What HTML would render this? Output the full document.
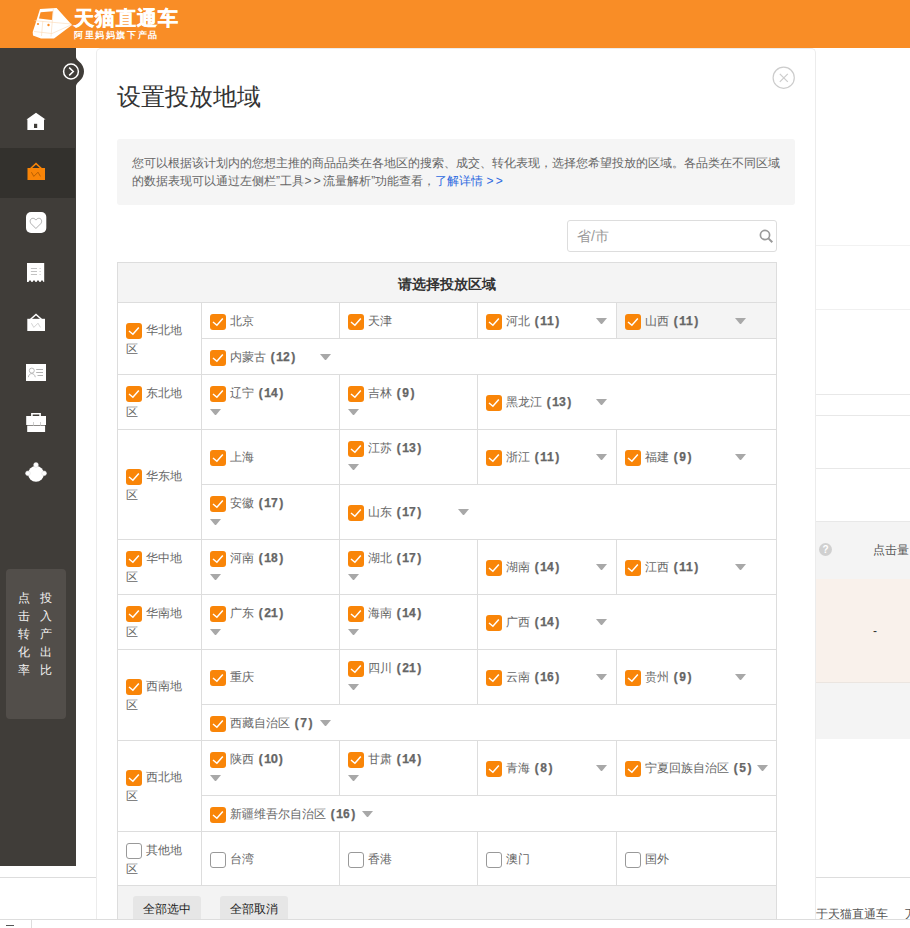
<!DOCTYPE html><html><head><meta charset="utf-8"><style>
*{margin:0;padding:0;box-sizing:border-box}
html,body{width:910px;height:928px;overflow:hidden;background:#fff;font-family:"Liberation Sans",sans-serif}
#root{position:relative;width:910px;height:928px;overflow:hidden}
.cb{position:absolute;width:16px;height:16px;border-radius:3px;background:#F98508}
.cb svg{display:block}
.cbu{position:absolute;width:16px;height:16px;border-radius:3px;border:1px solid #999;background:#fff}
.tri{position:absolute;display:block}
.t{position:absolute;font-size:12px;line-height:18px;color:#666;white-space:nowrap}
.t b{font-weight:bold;color:#666;font-family:"Liberation Mono",monospace;font-size:12px;letter-spacing:-0.5px;-webkit-text-stroke:0.25px #666}
.t i{font-style:normal;font-family:"Liberation Sans",sans-serif;font-size:13px;letter-spacing:0;margin-right:-1px}
.rg{position:absolute;font-size:12px;line-height:19px;color:#666;width:64px;word-break:break-all}
</style></head><body><div id="root">
<div style="position:absolute;left:0px;top:0px;width:910px;height:48px;background:#F98D26"></div>
<svg style="position:absolute;left:0;top:0" width="200" height="48" viewBox="0 0 200 48">
<polygon points="40,9 56.6,8 72,25 54,38.5 41,38.5 33,35.5 32.7,32 35,25" fill="#fff"/>
<polygon points="40.6,12.2 53,11.3 51.9,19.9 39,18.5" fill="#F98D26"/>
<path d="M34.6,20.7 L71.4,24 M53.3,8.6 L51,36.6 M42.8,21.2 L41.5,36 M34,31.5 L52,33.5 L71,25" fill="none" stroke="#FCD9B3" stroke-width="0.6"/>
<circle cx="38" cy="24" r="1.1" fill="#F98D26"/>
<circle cx="48.5" cy="25" r="1.2" fill="#F98D26"/>
</svg>
<div style="position:absolute;left:74px;top:5px;font-size:20px;line-height:26px;font-weight:bold;color:#fff;letter-spacing:1px;-webkit-text-stroke:0.5px #fff">天猫直通车</div>
<div style="position:absolute;left:74px;top:30px;font-size:9px;line-height:11px;font-weight:bold;color:#fff;letter-spacing:1.6px">阿里妈妈旗下产品</div>
<div style="position:absolute;left:0px;top:48px;width:76px;height:818px;background:#403D39"></div>
<div style="position:absolute;left:0px;top:148px;width:75px;height:50px;background:#33312D"></div>
<svg style="position:absolute;left:0;top:0" width="100" height="100" viewBox="0 0 100 100"><path d="M75.5,55 Q76,59.5 79,61.5 A12.5,12.5 0 0 1 79,81.5 Q76,83.5 75.5,88 Z" fill="#403D39"/><circle cx="71" cy="71.5" r="7.4" fill="none" stroke="#fff" stroke-width="1.5"/><path d="M69.2,67.6 L73.3,71.5 L69.2,75.4" fill="none" stroke="#fff" stroke-width="1.5"/></svg>
<svg style="position:absolute;left:26px;top:112px" width="20" height="20" viewBox="0 0 20 20"><path d="M10 0.7 L19.6 7.6 L18 7.6 L18 18 L1.4 18 L1.4 7.6 L0.5 7.6 Z" fill="#fff"/><rect x="8" y="11.8" width="3.2" height="4.2" fill="#403D39"/></svg>
<svg style="position:absolute;left:26px;top:162px" width="20" height="20" viewBox="0 0 20 20"><rect x="1.5" y="6" width="17.5" height="12" fill="#F98508"/><path d="M4.6 6.5 L10 1.6 L15.4 6.5" fill="none" stroke="#F98508" stroke-width="1.5"/><path d="M5.4 10.2 L7.8 14.4 L12 10.2 L14.4 14.4" fill="none" stroke="#A85500" stroke-width="0.8"/></svg>
<svg style="position:absolute;left:26px;top:212px" width="21" height="21" viewBox="0 0 21 21"><rect x="0" y="0" width="20.3" height="21" rx="5" fill="#fff"/><path d="M9.9 16.5 L5.2 11.8 C3.6 10.2 3.8 7 6.2 6.4 C7.8 6 9.1 6.9 9.9 8.1 C10.7 6.9 12 6 13.6 6.4 C16 7 16.2 10.2 14.6 11.8 Z" fill="none" stroke="#999" stroke-width="0.8"/></svg>
<svg style="position:absolute;left:27px;top:263px" width="18" height="19" viewBox="0 0 18 19"><path d="M0 0 H17.2 V19 H16.6 L15 17.1 L13.4 19 H12.6 L11 17.1 L9.4 19 H8.6 L7 17.1 L5.4 19 H4.6 L3 17.1 L1.4 19 H0 Z" fill="#fff"/><path d="M3.9 5.5 H10 M3.9 8.5 H10 M3.9 11.5 H10 M12.6 5.5 H13.6 M12.6 8.5 H13.6 M12.6 11.5 H13.6" stroke="#bbb" stroke-width="0.9"/></svg>
<svg style="position:absolute;left:26px;top:313px" width="20" height="19" viewBox="0 0 20 19"><rect x="1.3" y="5.8" width="17.7" height="12.2" fill="#fff"/><path d="M4.6 6.2 L10 1.5 L15.4 6.2" fill="none" stroke="#fff" stroke-width="1.5"/><path d="M5.4 10.2 L7.8 14.4 L12 10.2 L14.4 14.4" fill="none" stroke="#c8c8c8" stroke-width="0.8"/></svg>
<svg style="position:absolute;left:26px;top:364px" width="20" height="17" viewBox="0 0 20 17"><rect x="0" y="0" width="20" height="17" fill="#fff"/><circle cx="5.8" cy="6.6" r="2.5" fill="none" stroke="#aaa" stroke-width="0.8"/><path d="M2.3 13.2 C2.8 10.8 4 9.6 5.8 9.6 C7.6 9.6 8.8 10.8 9.3 13.2" fill="none" stroke="#aaa" stroke-width="0.8"/><path d="M10.2 5.5 H17 M10.2 8.5 H17 M11.5 11.5 H17" stroke="#aaa" stroke-width="0.9"/></svg>
<svg style="position:absolute;left:26px;top:412px" width="20" height="21" viewBox="0 0 20 21"><path d="M5.9 4.5 V1.8 H14.1 V4.5" fill="none" stroke="#fff" stroke-width="1.6"/><rect x="0.2" y="4" width="19.8" height="9" fill="#fff"/><rect x="1.2" y="13.6" width="17.9" height="6.4" fill="#fff"/><path d="M7.5 10 V14 M14.5 10 V14" stroke="#bbb" stroke-width="0.7"/></svg>
<svg style="position:absolute;left:25px;top:462px" width="22" height="21" viewBox="0 0 22 21"><circle cx="11" cy="11.8" r="7.9" fill="#fff"/><circle cx="11" cy="3" r="2.4" fill="#fff" stroke="#d8d8d8" stroke-width="0.5"/><circle cx="2.9" cy="11.3" r="2.4" fill="#fff" stroke="#d8d8d8" stroke-width="0.5"/><circle cx="19.1" cy="11.3" r="2.4" fill="#fff" stroke="#d8d8d8" stroke-width="0.5"/></svg>
<div style="position:absolute;left:6px;top:569px;width:60px;height:150px;background:#524E4A;border-radius:4px"></div>
<div style="position:absolute;left:18px;top:589px;width:12px;font-size:12px;line-height:18px;color:#f2f2f2">点击转化率</div>
<div style="position:absolute;left:40px;top:589px;width:12px;font-size:12px;line-height:18px;color:#f2f2f2">投入产出比</div>
<div style="position:absolute;left:816px;top:245px;width:94px;height:1px;background:#f2f2f2"></div>
<div style="position:absolute;left:816px;top:309px;width:94px;height:1px;background:#f0f0f0"></div>
<div style="position:absolute;left:816px;top:394px;width:94px;height:1px;background:#e8e8e8"></div>
<div style="position:absolute;left:816px;top:415px;width:94px;height:1px;background:#e8e8e8"></div>
<div style="position:absolute;left:816px;top:468px;width:94px;height:1px;background:#e8e8e8"></div>
<div style="position:absolute;left:816px;top:521px;width:94px;height:1px;background:#e8e8e8"></div>
<div style="position:absolute;left:816px;top:522px;width:94px;height:57px;background:#f4f4f4"></div>
<div style="position:absolute;left:816px;top:579px;width:94px;height:103px;background:#F9F1EB"></div>
<div style="position:absolute;left:816px;top:682px;width:94px;height:1px;background:#ebe5e0"></div>
<div style="position:absolute;left:816px;top:683px;width:94px;height:56px;background:#f4f4f4"></div>
<div style="position:absolute;left:819px;top:543px;width:13px;height:13px;border-radius:50%;background:#d0d0d0;color:#fff;font-size:10px;line-height:13px;text-align:center;font-weight:bold">?</div>
<div style="position:absolute;left:873px;top:541px;font-size:12px;line-height:18px;color:#555;white-space:nowrap">点击量</div>
<div style="position:absolute;left:873px;top:622px;font-size:12px;line-height:18px;color:#333">-</div>
<div style="position:absolute;left:0px;top:877px;width:96px;height:1px;background:#dddddd"></div>
<div style="position:absolute;left:816px;top:877px;width:94px;height:1px;background:#dddddd"></div>
<div style="position:absolute;left:816px;top:905px;width:94px;height:14px;overflow:hidden;font-size:12px;line-height:18px;color:#555;white-space:nowrap">于天猫直通车<span style="display:inline-block;width:17px"></span>万</div>
<div style="position:absolute;left:0px;top:919px;width:910px;height:1px;background:#dddddd"></div>
<div style="position:absolute;left:31px;top:919px;width:1px;height:9px;background:#dddddd"></div>
<div style="position:absolute;left:6px;top:925px;width:8px;height:1px;background:#555"></div>
<div style="position:absolute;left:96px;top:48px;width:720px;height:871px;background:#fff;border:1px solid #ececec;border-bottom:none;border-radius:5px 5px 0 0"></div>
<svg style="position:absolute;left:772px;top:66px" width="24" height="24" viewBox="0 0 24 24"><circle cx="11.7" cy="11.7" r="10.6" fill="none" stroke="#cccccc" stroke-width="1.2"/><path d="M7.8 7.8 L15.8 15.8 M15.8 7.8 L7.8 15.8" stroke="#cccccc" stroke-width="1.2"/></svg>
<div style="position:absolute;left:117px;top:81px;font-size:24px;line-height:32px;color:#333;white-space:nowrap">设置投放地域</div>
<div style="position:absolute;left:117px;top:139px;width:678px;height:66px;background:#f5f5f5;border-radius:3px"></div>
<div style="position:absolute;left:132px;top:154px;width:660px;font-size:12px;line-height:18px;color:#666">您可以根据该计划内的您想主推的商品品类在各地区的搜索、成交、转化表现，选择您希望投放的区域。各品类在不同区域<br>的数据表现可以通过左侧栏”工具<span style="letter-spacing:2.3px;margin-left:0.5px">&gt;&gt;</span>流量解析”功能查看，<span style="color:#2d6ae0">了解详情 <span style="letter-spacing:2.3px">&gt;&gt;</span></span></div>
<div style="position:absolute;left:567px;top:220px;width:210px;height:32px;border:1px solid #dddddd;border-radius:3px;background:#fff"></div>
<div style="position:absolute;left:577px;top:227px;font-size:14px;line-height:18px;color:#999">省/市</div>
<svg style="position:absolute;left:759px;top:229px" width="15" height="15" viewBox="0 0 15 15"><circle cx="6" cy="6" r="4.6" fill="none" stroke="#999" stroke-width="1.7"/><path d="M9.4 9.4 L13.3 13.3" stroke="#999" stroke-width="2"/></svg>
<div style="position:absolute;left:117px;top:262px;width:660px;height:40px;background:#f4f4f4;border:1px solid #dddddd;border-bottom:none"></div>
<div style="position:absolute;left:117px;top:275px;width:660px;text-align:center;font-size:14px;line-height:18px;font-weight:bold;color:#333">请选择投放区域</div>
<div style="position:absolute;left:117px;top:885px;width:660px;height:34px;background:#f3f3f3"></div>
<div style="position:absolute;left:133px;top:896px;width:68px;height:23px;background:#e6e6e6;border-radius:3px 3px 0 0"></div>
<div style="position:absolute;left:220px;top:896px;width:68px;height:23px;background:#e6e6e6;border-radius:3px 3px 0 0"></div>
<div style="position:absolute;left:143px;top:900px;font-size:12px;line-height:18px;color:#222">全部选中</div>
<div style="position:absolute;left:230px;top:900px;font-size:12px;line-height:18px;color:#222">全部取消</div>
<div style="position:absolute;left:617px;top:303px;width:159px;height:35px;background:#f4f4f4"></div>
<div class="cb" style="left:126px;top:323px"><svg width="16" height="16" viewBox="0 0 16 16"><path d="M3 8 L6.9 11.3 L12.8 4.6" fill="none" stroke="#fff" stroke-width="1.5"/></svg></div><div class="rg" style="left:126px;top:320.5px"><span style="display:inline-block;width:20px"></span>华北地区</div>
<div style="position:absolute;left:201px;top:338px;width:576px;height:1px;background:#dddddd"></div>
<div class="cb" style="left:210px;top:314px"><svg width="16" height="16" viewBox="0 0 16 16"><path d="M3 8 L6.9 11.3 L12.8 4.6" fill="none" stroke="#fff" stroke-width="1.5"/></svg></div><div class="t" style="left:230px;top:312px">北京</div>
<div class="cb" style="left:348px;top:314px"><svg width="16" height="16" viewBox="0 0 16 16"><path d="M3 8 L6.9 11.3 L12.8 4.6" fill="none" stroke="#fff" stroke-width="1.5"/></svg></div><div class="t" style="left:368px;top:312px">天津</div>
<div style="position:absolute;left:339px;top:302px;width:1px;height:36px;background:#dddddd"></div>
<div class="cb" style="left:486px;top:314px"><svg width="16" height="16" viewBox="0 0 16 16"><path d="M3 8 L6.9 11.3 L12.8 4.6" fill="none" stroke="#fff" stroke-width="1.5"/></svg></div><div class="t" style="left:506px;top:312px">河北 <b>(11)</b></div><svg class="tri" style="left:596px;top:318px" width="11" height="6" viewBox="0 0 11 6"><polygon points="0,0 11,0 6,6 5,6" fill="#a8a8a8"/></svg>
<div style="position:absolute;left:477px;top:302px;width:1px;height:36px;background:#dddddd"></div>
<div class="cb" style="left:625px;top:314px"><svg width="16" height="16" viewBox="0 0 16 16"><path d="M3 8 L6.9 11.3 L12.8 4.6" fill="none" stroke="#fff" stroke-width="1.5"/></svg></div><div class="t" style="left:645px;top:312px">山西 <b>(11)</b></div><svg class="tri" style="left:735px;top:318px" width="11" height="6" viewBox="0 0 11 6"><polygon points="0,0 11,0 6,6 5,6" fill="#a8a8a8"/></svg>
<div style="position:absolute;left:616px;top:302px;width:1px;height:36px;background:#dddddd"></div>
<div style="position:absolute;left:201px;top:374px;width:576px;height:1px;background:#dddddd"></div>
<div class="cb" style="left:210px;top:350px"><svg width="16" height="16" viewBox="0 0 16 16"><path d="M3 8 L6.9 11.3 L12.8 4.6" fill="none" stroke="#fff" stroke-width="1.5"/></svg></div><div class="t" style="left:230px;top:348px">内蒙古 <b>(12)</b></div><svg class="tri" style="left:320px;top:354px" width="11" height="6" viewBox="0 0 11 6"><polygon points="0,0 11,0 6,6 5,6" fill="#a8a8a8"/></svg>
<div style="position:absolute;left:117px;top:374px;width:84px;height:1px;background:#dddddd"></div>
<div class="cb" style="left:126px;top:386px"><svg width="16" height="16" viewBox="0 0 16 16"><path d="M3 8 L6.9 11.3 L12.8 4.6" fill="none" stroke="#fff" stroke-width="1.5"/></svg></div><div class="rg" style="left:126px;top:383.5px"><span style="display:inline-block;width:20px"></span>东北地区</div>
<div style="position:absolute;left:201px;top:429px;width:576px;height:1px;background:#dddddd"></div>
<div class="cb" style="left:210px;top:386px"><svg width="16" height="16" viewBox="0 0 16 16"><path d="M3 8 L6.9 11.3 L12.8 4.6" fill="none" stroke="#fff" stroke-width="1.5"/></svg></div><div class="t" style="left:230px;top:384px">辽宁 <b>(14)</b></div><svg class="tri" style="left:210px;top:409px" width="11" height="6" viewBox="0 0 11 6"><polygon points="0,0 11,0 6,6 5,6" fill="#a8a8a8"/></svg>
<div class="cb" style="left:348px;top:386px"><svg width="16" height="16" viewBox="0 0 16 16"><path d="M3 8 L6.9 11.3 L12.8 4.6" fill="none" stroke="#fff" stroke-width="1.5"/></svg></div><div class="t" style="left:368px;top:384px">吉林 <b>(9)</b></div><svg class="tri" style="left:348px;top:409px" width="11" height="6" viewBox="0 0 11 6"><polygon points="0,0 11,0 6,6 5,6" fill="#a8a8a8"/></svg>
<div style="position:absolute;left:339px;top:374px;width:1px;height:55px;background:#dddddd"></div>
<div class="cb" style="left:486px;top:395px"><svg width="16" height="16" viewBox="0 0 16 16"><path d="M3 8 L6.9 11.3 L12.8 4.6" fill="none" stroke="#fff" stroke-width="1.5"/></svg></div><div class="t" style="left:506px;top:393px">黑龙江 <b>(13)</b></div><svg class="tri" style="left:596px;top:399px" width="11" height="6" viewBox="0 0 11 6"><polygon points="0,0 11,0 6,6 5,6" fill="#a8a8a8"/></svg>
<div style="position:absolute;left:477px;top:374px;width:1px;height:55px;background:#dddddd"></div>
<div style="position:absolute;left:117px;top:429px;width:84px;height:1px;background:#dddddd"></div>
<div class="cb" style="left:126px;top:469px"><svg width="16" height="16" viewBox="0 0 16 16"><path d="M3 8 L6.9 11.3 L12.8 4.6" fill="none" stroke="#fff" stroke-width="1.5"/></svg></div><div class="rg" style="left:126px;top:466.5px"><span style="display:inline-block;width:20px"></span>华东地区</div>
<div style="position:absolute;left:201px;top:484px;width:576px;height:1px;background:#dddddd"></div>
<div class="cb" style="left:210px;top:450px"><svg width="16" height="16" viewBox="0 0 16 16"><path d="M3 8 L6.9 11.3 L12.8 4.6" fill="none" stroke="#fff" stroke-width="1.5"/></svg></div><div class="t" style="left:230px;top:448px">上海</div>
<div class="cb" style="left:348px;top:441px"><svg width="16" height="16" viewBox="0 0 16 16"><path d="M3 8 L6.9 11.3 L12.8 4.6" fill="none" stroke="#fff" stroke-width="1.5"/></svg></div><div class="t" style="left:368px;top:439px">江苏 <b>(13)</b></div><svg class="tri" style="left:348px;top:464px" width="11" height="6" viewBox="0 0 11 6"><polygon points="0,0 11,0 6,6 5,6" fill="#a8a8a8"/></svg>
<div style="position:absolute;left:339px;top:429px;width:1px;height:55px;background:#dddddd"></div>
<div class="cb" style="left:486px;top:450px"><svg width="16" height="16" viewBox="0 0 16 16"><path d="M3 8 L6.9 11.3 L12.8 4.6" fill="none" stroke="#fff" stroke-width="1.5"/></svg></div><div class="t" style="left:506px;top:448px">浙江 <b>(11)</b></div><svg class="tri" style="left:596px;top:454px" width="11" height="6" viewBox="0 0 11 6"><polygon points="0,0 11,0 6,6 5,6" fill="#a8a8a8"/></svg>
<div style="position:absolute;left:477px;top:429px;width:1px;height:55px;background:#dddddd"></div>
<div class="cb" style="left:625px;top:450px"><svg width="16" height="16" viewBox="0 0 16 16"><path d="M3 8 L6.9 11.3 L12.8 4.6" fill="none" stroke="#fff" stroke-width="1.5"/></svg></div><div class="t" style="left:645px;top:448px">福建 <b>(9)</b></div><svg class="tri" style="left:735px;top:454px" width="11" height="6" viewBox="0 0 11 6"><polygon points="0,0 11,0 6,6 5,6" fill="#a8a8a8"/></svg>
<div style="position:absolute;left:616px;top:429px;width:1px;height:55px;background:#dddddd"></div>
<div style="position:absolute;left:201px;top:539px;width:576px;height:1px;background:#dddddd"></div>
<div class="cb" style="left:210px;top:496px"><svg width="16" height="16" viewBox="0 0 16 16"><path d="M3 8 L6.9 11.3 L12.8 4.6" fill="none" stroke="#fff" stroke-width="1.5"/></svg></div><div class="t" style="left:230px;top:494px">安徽 <b>(17)</b></div><svg class="tri" style="left:210px;top:519px" width="11" height="6" viewBox="0 0 11 6"><polygon points="0,0 11,0 6,6 5,6" fill="#a8a8a8"/></svg>
<div class="cb" style="left:348px;top:505px"><svg width="16" height="16" viewBox="0 0 16 16"><path d="M3 8 L6.9 11.3 L12.8 4.6" fill="none" stroke="#fff" stroke-width="1.5"/></svg></div><div class="t" style="left:368px;top:503px">山东 <b>(17)</b></div><svg class="tri" style="left:458px;top:509px" width="11" height="6" viewBox="0 0 11 6"><polygon points="0,0 11,0 6,6 5,6" fill="#a8a8a8"/></svg>
<div style="position:absolute;left:339px;top:484px;width:1px;height:55px;background:#dddddd"></div>
<div style="position:absolute;left:117px;top:539px;width:84px;height:1px;background:#dddddd"></div>
<div class="cb" style="left:126px;top:551px"><svg width="16" height="16" viewBox="0 0 16 16"><path d="M3 8 L6.9 11.3 L12.8 4.6" fill="none" stroke="#fff" stroke-width="1.5"/></svg></div><div class="rg" style="left:126px;top:548.5px"><span style="display:inline-block;width:20px"></span>华中地区</div>
<div style="position:absolute;left:201px;top:594px;width:576px;height:1px;background:#dddddd"></div>
<div class="cb" style="left:210px;top:551px"><svg width="16" height="16" viewBox="0 0 16 16"><path d="M3 8 L6.9 11.3 L12.8 4.6" fill="none" stroke="#fff" stroke-width="1.5"/></svg></div><div class="t" style="left:230px;top:549px">河南 <b>(18)</b></div><svg class="tri" style="left:210px;top:574px" width="11" height="6" viewBox="0 0 11 6"><polygon points="0,0 11,0 6,6 5,6" fill="#a8a8a8"/></svg>
<div class="cb" style="left:348px;top:551px"><svg width="16" height="16" viewBox="0 0 16 16"><path d="M3 8 L6.9 11.3 L12.8 4.6" fill="none" stroke="#fff" stroke-width="1.5"/></svg></div><div class="t" style="left:368px;top:549px">湖北 <b>(17)</b></div><svg class="tri" style="left:348px;top:574px" width="11" height="6" viewBox="0 0 11 6"><polygon points="0,0 11,0 6,6 5,6" fill="#a8a8a8"/></svg>
<div style="position:absolute;left:339px;top:539px;width:1px;height:55px;background:#dddddd"></div>
<div class="cb" style="left:486px;top:560px"><svg width="16" height="16" viewBox="0 0 16 16"><path d="M3 8 L6.9 11.3 L12.8 4.6" fill="none" stroke="#fff" stroke-width="1.5"/></svg></div><div class="t" style="left:506px;top:558px">湖南 <b>(14)</b></div><svg class="tri" style="left:596px;top:564px" width="11" height="6" viewBox="0 0 11 6"><polygon points="0,0 11,0 6,6 5,6" fill="#a8a8a8"/></svg>
<div style="position:absolute;left:477px;top:539px;width:1px;height:55px;background:#dddddd"></div>
<div class="cb" style="left:625px;top:560px"><svg width="16" height="16" viewBox="0 0 16 16"><path d="M3 8 L6.9 11.3 L12.8 4.6" fill="none" stroke="#fff" stroke-width="1.5"/></svg></div><div class="t" style="left:645px;top:558px">江西 <b>(11)</b></div><svg class="tri" style="left:735px;top:564px" width="11" height="6" viewBox="0 0 11 6"><polygon points="0,0 11,0 6,6 5,6" fill="#a8a8a8"/></svg>
<div style="position:absolute;left:616px;top:539px;width:1px;height:55px;background:#dddddd"></div>
<div style="position:absolute;left:117px;top:594px;width:84px;height:1px;background:#dddddd"></div>
<div class="cb" style="left:126px;top:606px"><svg width="16" height="16" viewBox="0 0 16 16"><path d="M3 8 L6.9 11.3 L12.8 4.6" fill="none" stroke="#fff" stroke-width="1.5"/></svg></div><div class="rg" style="left:126px;top:603.5px"><span style="display:inline-block;width:20px"></span>华南地区</div>
<div style="position:absolute;left:201px;top:649px;width:576px;height:1px;background:#dddddd"></div>
<div class="cb" style="left:210px;top:606px"><svg width="16" height="16" viewBox="0 0 16 16"><path d="M3 8 L6.9 11.3 L12.8 4.6" fill="none" stroke="#fff" stroke-width="1.5"/></svg></div><div class="t" style="left:230px;top:604px">广东 <b>(21)</b></div><svg class="tri" style="left:210px;top:629px" width="11" height="6" viewBox="0 0 11 6"><polygon points="0,0 11,0 6,6 5,6" fill="#a8a8a8"/></svg>
<div class="cb" style="left:348px;top:606px"><svg width="16" height="16" viewBox="0 0 16 16"><path d="M3 8 L6.9 11.3 L12.8 4.6" fill="none" stroke="#fff" stroke-width="1.5"/></svg></div><div class="t" style="left:368px;top:604px">海南 <b>(14)</b></div><svg class="tri" style="left:348px;top:629px" width="11" height="6" viewBox="0 0 11 6"><polygon points="0,0 11,0 6,6 5,6" fill="#a8a8a8"/></svg>
<div style="position:absolute;left:339px;top:594px;width:1px;height:55px;background:#dddddd"></div>
<div class="cb" style="left:486px;top:615px"><svg width="16" height="16" viewBox="0 0 16 16"><path d="M3 8 L6.9 11.3 L12.8 4.6" fill="none" stroke="#fff" stroke-width="1.5"/></svg></div><div class="t" style="left:506px;top:613px">广西 <b>(14)</b></div><svg class="tri" style="left:596px;top:619px" width="11" height="6" viewBox="0 0 11 6"><polygon points="0,0 11,0 6,6 5,6" fill="#a8a8a8"/></svg>
<div style="position:absolute;left:477px;top:594px;width:1px;height:55px;background:#dddddd"></div>
<div style="position:absolute;left:117px;top:649px;width:84px;height:1px;background:#dddddd"></div>
<div class="cb" style="left:126px;top:679px"><svg width="16" height="16" viewBox="0 0 16 16"><path d="M3 8 L6.9 11.3 L12.8 4.6" fill="none" stroke="#fff" stroke-width="1.5"/></svg></div><div class="rg" style="left:126px;top:676.5px"><span style="display:inline-block;width:20px"></span>西南地区</div>
<div style="position:absolute;left:201px;top:704px;width:576px;height:1px;background:#dddddd"></div>
<div class="cb" style="left:210px;top:670px"><svg width="16" height="16" viewBox="0 0 16 16"><path d="M3 8 L6.9 11.3 L12.8 4.6" fill="none" stroke="#fff" stroke-width="1.5"/></svg></div><div class="t" style="left:230px;top:668px">重庆</div>
<div class="cb" style="left:348px;top:661px"><svg width="16" height="16" viewBox="0 0 16 16"><path d="M3 8 L6.9 11.3 L12.8 4.6" fill="none" stroke="#fff" stroke-width="1.5"/></svg></div><div class="t" style="left:368px;top:659px">四川 <b>(21)</b></div><svg class="tri" style="left:348px;top:684px" width="11" height="6" viewBox="0 0 11 6"><polygon points="0,0 11,0 6,6 5,6" fill="#a8a8a8"/></svg>
<div style="position:absolute;left:339px;top:649px;width:1px;height:55px;background:#dddddd"></div>
<div class="cb" style="left:486px;top:670px"><svg width="16" height="16" viewBox="0 0 16 16"><path d="M3 8 L6.9 11.3 L12.8 4.6" fill="none" stroke="#fff" stroke-width="1.5"/></svg></div><div class="t" style="left:506px;top:668px">云南 <b>(16)</b></div><svg class="tri" style="left:596px;top:674px" width="11" height="6" viewBox="0 0 11 6"><polygon points="0,0 11,0 6,6 5,6" fill="#a8a8a8"/></svg>
<div style="position:absolute;left:477px;top:649px;width:1px;height:55px;background:#dddddd"></div>
<div class="cb" style="left:625px;top:670px"><svg width="16" height="16" viewBox="0 0 16 16"><path d="M3 8 L6.9 11.3 L12.8 4.6" fill="none" stroke="#fff" stroke-width="1.5"/></svg></div><div class="t" style="left:645px;top:668px">贵州 <b>(9)</b></div><svg class="tri" style="left:735px;top:674px" width="11" height="6" viewBox="0 0 11 6"><polygon points="0,0 11,0 6,6 5,6" fill="#a8a8a8"/></svg>
<div style="position:absolute;left:616px;top:649px;width:1px;height:55px;background:#dddddd"></div>
<div style="position:absolute;left:201px;top:740px;width:576px;height:1px;background:#dddddd"></div>
<div class="cb" style="left:210px;top:716px"><svg width="16" height="16" viewBox="0 0 16 16"><path d="M3 8 L6.9 11.3 L12.8 4.6" fill="none" stroke="#fff" stroke-width="1.5"/></svg></div><div class="t" style="left:230px;top:714px">西藏自治区 <b>(7)</b></div><svg class="tri" style="left:320px;top:720px" width="11" height="6" viewBox="0 0 11 6"><polygon points="0,0 11,0 6,6 5,6" fill="#a8a8a8"/></svg>
<div style="position:absolute;left:117px;top:740px;width:84px;height:1px;background:#dddddd"></div>
<div class="cb" style="left:126px;top:770px"><svg width="16" height="16" viewBox="0 0 16 16"><path d="M3 8 L6.9 11.3 L12.8 4.6" fill="none" stroke="#fff" stroke-width="1.5"/></svg></div><div class="rg" style="left:126px;top:767.5px"><span style="display:inline-block;width:20px"></span>西北地区</div>
<div style="position:absolute;left:201px;top:795px;width:576px;height:1px;background:#dddddd"></div>
<div class="cb" style="left:210px;top:752px"><svg width="16" height="16" viewBox="0 0 16 16"><path d="M3 8 L6.9 11.3 L12.8 4.6" fill="none" stroke="#fff" stroke-width="1.5"/></svg></div><div class="t" style="left:230px;top:750px">陕西 <b>(1<i>0</i>)</b></div><svg class="tri" style="left:210px;top:775px" width="11" height="6" viewBox="0 0 11 6"><polygon points="0,0 11,0 6,6 5,6" fill="#a8a8a8"/></svg>
<div class="cb" style="left:348px;top:752px"><svg width="16" height="16" viewBox="0 0 16 16"><path d="M3 8 L6.9 11.3 L12.8 4.6" fill="none" stroke="#fff" stroke-width="1.5"/></svg></div><div class="t" style="left:368px;top:750px">甘肃 <b>(14)</b></div><svg class="tri" style="left:348px;top:775px" width="11" height="6" viewBox="0 0 11 6"><polygon points="0,0 11,0 6,6 5,6" fill="#a8a8a8"/></svg>
<div style="position:absolute;left:339px;top:740px;width:1px;height:55px;background:#dddddd"></div>
<div class="cb" style="left:486px;top:761px"><svg width="16" height="16" viewBox="0 0 16 16"><path d="M3 8 L6.9 11.3 L12.8 4.6" fill="none" stroke="#fff" stroke-width="1.5"/></svg></div><div class="t" style="left:506px;top:759px">青海 <b>(8)</b></div><svg class="tri" style="left:596px;top:765px" width="11" height="6" viewBox="0 0 11 6"><polygon points="0,0 11,0 6,6 5,6" fill="#a8a8a8"/></svg>
<div style="position:absolute;left:477px;top:740px;width:1px;height:55px;background:#dddddd"></div>
<div class="cb" style="left:625px;top:761px"><svg width="16" height="16" viewBox="0 0 16 16"><path d="M3 8 L6.9 11.3 L12.8 4.6" fill="none" stroke="#fff" stroke-width="1.5"/></svg></div><div class="t" style="left:645px;top:759px">宁夏回族自治区 <b>(5)</b></div><svg class="tri" style="left:757px;top:765px" width="11" height="6" viewBox="0 0 11 6"><polygon points="0,0 11,0 6,6 5,6" fill="#a8a8a8"/></svg>
<div style="position:absolute;left:616px;top:740px;width:1px;height:55px;background:#dddddd"></div>
<div style="position:absolute;left:201px;top:831px;width:576px;height:1px;background:#dddddd"></div>
<div class="cb" style="left:210px;top:807px"><svg width="16" height="16" viewBox="0 0 16 16"><path d="M3 8 L6.9 11.3 L12.8 4.6" fill="none" stroke="#fff" stroke-width="1.5"/></svg></div><div class="t" style="left:230px;top:805px">新疆维吾尔自治区 <b>(16)</b></div><svg class="tri" style="left:362px;top:811px" width="11" height="6" viewBox="0 0 11 6"><polygon points="0,0 11,0 6,6 5,6" fill="#a8a8a8"/></svg>
<div style="position:absolute;left:117px;top:831px;width:84px;height:1px;background:#dddddd"></div>
<div class="cbu" style="left:126px;top:843px"></div><div class="rg" style="left:126px;top:840.5px"><span style="display:inline-block;width:20px"></span>其他地区</div>
<div style="position:absolute;left:201px;top:885px;width:576px;height:1px;background:#dddddd"></div>
<div class="cbu" style="left:210px;top:852px"></div><div class="t" style="left:230px;top:850px">台湾</div>
<div class="cbu" style="left:348px;top:852px"></div><div class="t" style="left:368px;top:850px">香港</div>
<div style="position:absolute;left:339px;top:831px;width:1px;height:54px;background:#dddddd"></div>
<div class="cbu" style="left:486px;top:852px"></div><div class="t" style="left:506px;top:850px">澳门</div>
<div style="position:absolute;left:477px;top:831px;width:1px;height:54px;background:#dddddd"></div>
<div class="cbu" style="left:625px;top:852px"></div><div class="t" style="left:645px;top:850px">国外</div>
<div style="position:absolute;left:616px;top:831px;width:1px;height:54px;background:#dddddd"></div>
<div style="position:absolute;left:117px;top:885px;width:84px;height:1px;background:#dddddd"></div>
<div style="position:absolute;left:117px;top:302px;width:660px;height:1px;background:#dddddd"></div>
<div style="position:absolute;left:117px;top:262px;width:1px;height:657px;background:#dddddd"></div>
<div style="position:absolute;left:776px;top:262px;width:1px;height:657px;background:#dddddd"></div>
<div style="position:absolute;left:201px;top:302px;width:1px;height:583px;background:#dddddd"></div>
</div></body></html>
